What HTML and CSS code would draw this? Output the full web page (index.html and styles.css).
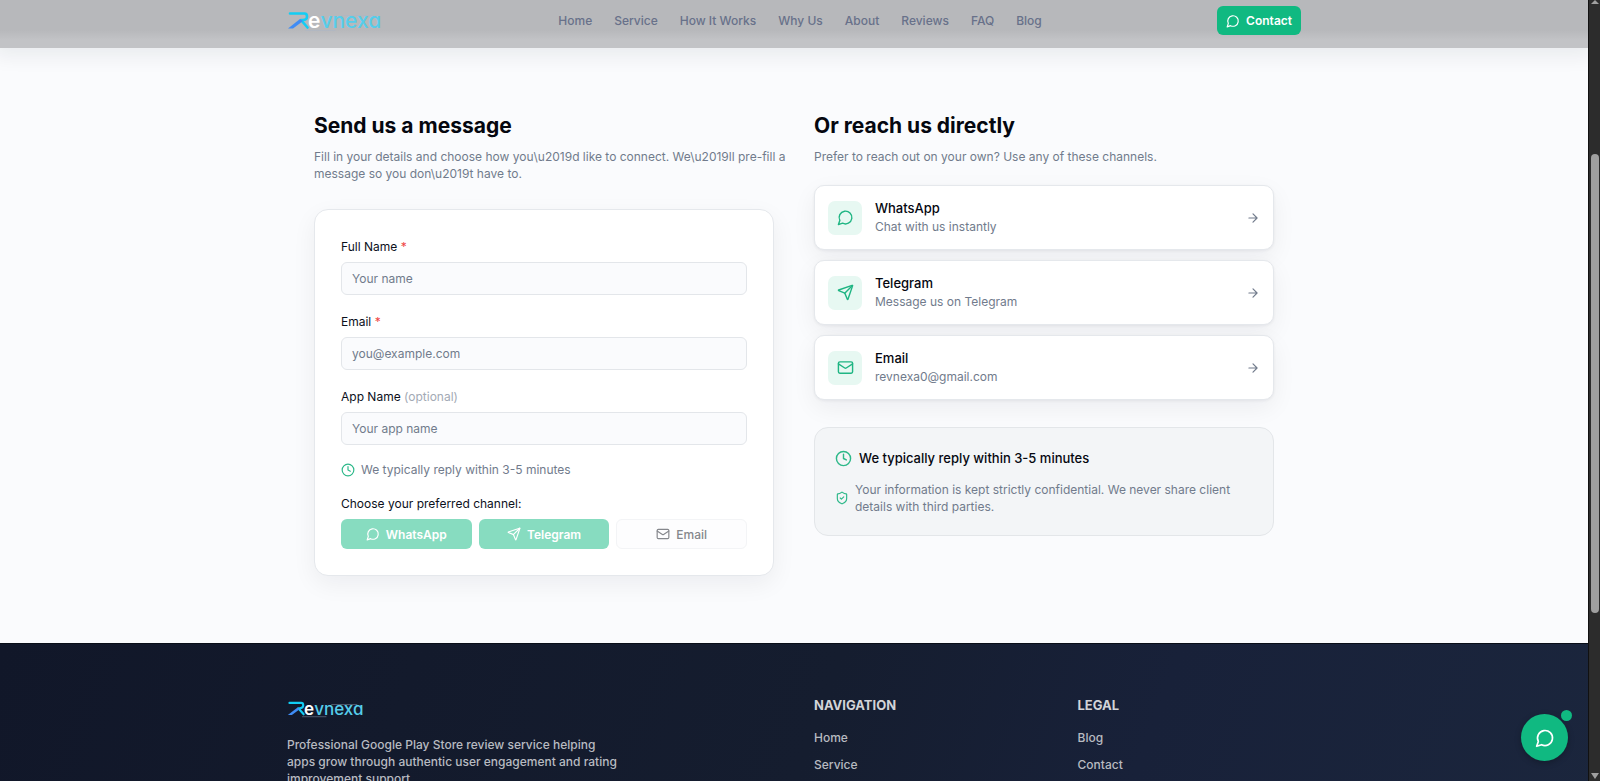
FILE: index.html
```html
<!DOCTYPE html>
<html lang="en">
<head>
<meta charset="utf-8">
<meta name="viewport" content="width=device-width, initial-scale=1">
<title>Contact - Revnexa</title>
<link rel="stylesheet" href="styles.css">
</head>
<body>
<svg class="sprite" aria-hidden="true">
  <symbol id="chat" viewBox="0 0 24 24"><path d="M7.9 20A9 9 0 1 0 4 16.1L2 22Z"/></symbol>
  <symbol id="send" viewBox="0 0 24 24"><path d="M14.536 21.686a.5.5 0 0 0 .937-.024l6.5-19a.496.496 0 0 0-.635-.635l-19 6.5a.5.5 0 0 0-.024.937l7.93 3.18a2 2 0 0 1 1.112 1.11z"/><path d="m21.854 2.147-10.94 10.939"/></symbol>
  <symbol id="mail" viewBox="0 0 24 24"><rect width="20" height="16" x="2" y="4" rx="2"/><path d="m22 7-8.97 5.7a1.94 1.94 0 0 1-2.06 0L2 7"/></symbol>
  <symbol id="clock" viewBox="0 0 24 24"><circle cx="12" cy="12" r="10"/><path d="M12 6v6l4 2"/></symbol>
  <symbol id="shield" viewBox="0 0 24 24"><path d="M20 13c0 5-3.500 7.500-7.660 8.950a1 1 0 0 1-.67-.01C7.500 20.500 4 18 4 13V6a1 1 0 0 1 1-1c2 0 4.500-1.200 6.240-2.720a1.170 1.170 0 0 1 1.520 0C14.510 3.810 17 5 19 5a1 1 0 0 1 1 1z"/><path d="m9 12 2 2 4-4"/></symbol>
  <symbol id="arrow" viewBox="0 0 24 24"><path d="M5 12h14M12 5l7 7-7 7"/></symbol>
  <symbol id="logo" viewBox="0 0 96 24">
    <path d="M3 4.500H17.500Q20 4.500 20 7.500Q20 11 16 11H14L20.500 18.500" fill="none" stroke="#12cdf4" stroke-width="2.600"/>
    <path d="M1 19.500L13 10L16 12L6 19.500Z" fill="#3f8cf5"/>
    <path d="M55 6.500H86M19 21.500H48" class="logo-rule"/>
    <text x="21" y="19" class="logo-text"><tspan fill="#ffffff" font-weight="600">e</tspan><tspan fill="#56cdea">vnexa</tspan></text>
  </symbol>
</svg>

<div class="window">
  <div class="page">
    <header class="header">
      <div class="wide header-row">
        <a href="#" aria-label="Revnexa"><svg class="logo"><use href="#logo"/></svg></a>
        <nav class="nav" aria-label="Main">
          <a href="#">Home</a><a href="#">Service</a><a href="#">How It Works</a><a href="#">Why Us</a><a href="#">About</a><a href="#">Reviews</a><a href="#">FAQ</a><a href="#">Blog</a>
        </nav>
        <a href="#" class="contact"><svg class="icon"><use href="#chat"/></svg>Contact</a>
      </div>
    </header>

    <main class="content">
      <section>
        <h2>Send us a message</h2>
        <p class="lead">Fill in your details and choose how you\u2019d like to connect. We\u2019ll pre-fill a message so you don\u2019t have to.</p>
        <form class="form">
          <div class="field">
            <label for="name">Full Name <span class="required">*</span></label>
            <input id="name" type="text" placeholder="Your name">
          </div>
          <div class="field">
            <label for="email">Email <span class="required">*</span></label>
            <input id="email" type="email" placeholder="you@example.com">
          </div>
          <div class="field">
            <label for="app">App Name <span class="optional">(optional)</span></label>
            <input id="app" type="text" placeholder="Your app name">
          </div>
          <p class="reply"><svg class="icon"><use href="#clock"/></svg>We typically reply within 3-5 minutes</p>
          <p class="choose">Choose your preferred channel:</p>
          <div class="channels">
            <button type="button" class="solid" disabled><svg class="icon"><use href="#chat"/></svg>WhatsApp</button>
            <button type="button" class="solid" disabled><svg class="icon"><use href="#send"/></svg>Telegram</button>
            <button type="button" class="outline" disabled><svg class="icon"><use href="#mail"/></svg>Email</button>
          </div>
        </form>
      </section>

      <section>
        <h2>Or reach us directly</h2>
        <p class="lead">Prefer to reach out on your own? Use any of these channels.</p>
        <div class="cards">
          <a href="#" class="card">
            <span class="badge"><svg><use href="#chat"/></svg></span>
            <span class="card-text"><strong>WhatsApp</strong><span>Chat with us instantly</span></span>
            <svg class="icon"><use href="#arrow"/></svg>
          </a>
          <a href="#" class="card">
            <span class="badge"><svg><use href="#send"/></svg></span>
            <span class="card-text"><strong>Telegram</strong><span>Message us on Telegram</span></span>
            <svg class="icon"><use href="#arrow"/></svg>
          </a>
          <a href="#" class="card">
            <span class="badge"><svg><use href="#mail"/></svg></span>
            <span class="card-text"><strong>Email</strong><span>revnexa0@gmail.com</span></span>
            <svg class="icon"><use href="#arrow"/></svg>
          </a>
        </div>
        <div class="info">
          <p class="info-title"><svg><use href="#clock"/></svg>We typically reply within 3-5 minutes</p>
          <p class="info-note"><svg class="icon"><use href="#shield"/></svg>Your information is kept strictly confidential. We never share client details with third parties.</p>
        </div>
      </section>
    </main>

    <footer class="footer">
      <div class="wide footer-grid">
        <div class="brand">
          <a href="#" aria-label="Revnexa"><svg class="logo small"><use href="#logo"/></svg></a>
          <p class="about">Professional Google Play Store review service helping apps grow through authentic user engagement and rating improvement support.</p>
        </div>
        <nav aria-labelledby="nav-title">
          <h3 id="nav-title">NAVIGATION</h3>
          <a href="#">Home</a>
          <a href="#">Service</a>
        </nav>
        <nav aria-labelledby="legal-title">
          <h3 id="legal-title">LEGAL</h3>
          <a href="#">Blog</a>
          <a href="#">Contact</a>
        </nav>
      </div>
    </footer>
    <button type="button" class="float" aria-label="Chat with us"><svg><use href="#chat"/></svg><span class="dot"></span></button>
  </div>
  <div class="scrollbar" aria-hidden="true">
    <span class="up"></span>
    <span class="thumb"></span>
    <span class="down"></span>
  </div>
</div>
</body>
</html>
```
FILE: styles.css
```css
* { box-sizing: border-box; }
body, h2, h3, p { margin: 0; }
body { font: 12px/17px Inter, "Liberation Sans", sans-serif; color: #05070f; background: #fafbfd; }
a { color: inherit; text-decoration: none; }
svg { fill: none; stroke: currentColor; stroke-width: 2; stroke-linecap: round; stroke-linejoin: round; flex: none; }
button, input { font: inherit; }
.sprite { display: none; }
.icon { width: 14px; height: 14px; }

.window { display: flex; height: 100vh; }
.page { position: relative; flex: 1; min-width: 0; overflow: hidden; }
.wide { width: 100%; max-width: 1014px; margin: 0 auto; }

.header { position: relative; height: 48px; background: linear-gradient(#b7b8bb 0 30px, #c2c3c6 40px 100%); box-shadow: 0 2px 20px 6px rgba(15, 23, 42, .07); }
.header-row { display: flex; align-items: center; justify-content: space-between; height: 41px; }
.logo { display: block; width: 96px; height: 24px; stroke: none; }
.logo.small { width: 78px; height: 20px; }
.logo-text { font-family: Inter, sans-serif; font-size: 21px; font-weight: 500; font-feature-settings: "cv11"; stroke: none; }
.logo-rule { stroke: #a9b6c8; stroke-opacity: .5; stroke-width: 1; }
.nav { display: flex; gap: 22px; color: #68718a; font-weight: 500; }
.contact { display: flex; align-items: center; gap: 6px; height: 29px; padding: 0 9px; border-radius: 6px; background: #10b981; color: #fff; font-weight: 600; }

.content { display: grid; grid-template-columns: 1fr 1fr; align-items: start; gap: 40px; max-width: 960px; margin: 0 auto; padding: 64px 0 67px; }
h2 { font-size: 21px; line-height: 28px; font-weight: 700; margin-bottom: 8px; }
.lead { margin-right: -20px; color: #717b8c; }
.form { margin-top: 27px; padding: 28px 26px 26px; border: 1px solid #e5e8ec; border-radius: 14px; background: #fff; box-shadow: 0 8px 24px rgba(15, 23, 42, .06); }
.field { display: grid; gap: 7px; margin-bottom: 18px; }
.form label, .choose { color: #0c101b; }
.required { color: #ef4444; }
.optional { color: #a3aab5; }
.field input { width: 100%; height: 33px; padding: 0 10px; border: 1px solid #e3e6ea; border-radius: 6px; background: #fafbfd; color: #05070f; }
.field input::placeholder { color: #717b8c; opacity: 1; }
.field:nth-of-type(3) { margin-bottom: 16px; }
.reply { display: flex; align-items: center; gap: 6px; color: #717b8c; margin-bottom: 17px; }
.reply .icon, .info svg { color: #2cb889; }
.choose { margin-bottom: 7px; }
.channels { display: grid; grid-template-columns: repeat(3, 1fr); gap: 7px; }
.channels button { display: flex; align-items: center; justify-content: center; gap: 6px; height: 30px; padding: 0; border: 0; border-radius: 6px; }
.channels .solid { background: #87dcc0; color: #fff; font-weight: 600; }
.channels .outline { border: 1px solid #f3f4f6; background: #fdfdfe; color: #85878c; font-weight: 500; }

.cards { display: grid; gap: 10px; margin: 20px 0 27px; }
.card { display: flex; align-items: center; gap: 13px; height: 65px; padding: 0 13px; border: 1px solid #e5e8ec; border-radius: 10px; background: #fff; color: #717b8c; box-shadow: 0 8px 24px rgba(15, 23, 42, .06), 0 1px 3px rgba(15, 23, 42, .06); }
.badge { display: grid; place-items: center; width: 34px; height: 34px; border-radius: 7px; background: #e7f8f2; color: #1fb583; }
.badge svg, .info-title svg { width: 17px; height: 17px; }
.card-text { display: grid; gap: 1px; flex: 1; }
.card strong { color: #05070f; font-size: 13px; font-weight: 500; }
.info { padding: 20px; border: 1px solid #e3e6e9; border-radius: 14px; background: #f3f5f7; }
.info-title { display: flex; align-items: center; gap: 7px; font-size: 13px; line-height: 20px; font-weight: 500; margin-bottom: 13px; }
.info-note { display: flex; align-items: center; gap: 6px; color: #717b8c; }

.footer { min-height: 280px; padding-top: 53px; border-top: 1px solid #090e18; background: linear-gradient(110deg, #111729 0%, #151d2f 50%, #182139 70%, #1b263d 100%); color: #b8bbc1; font-weight: 500; }
.footer-grid { display: grid; grid-template-columns: repeat(4, 1fr); gap: 40px; }
.brand { grid-column: span 2; padding-top: 2px; }
.about { max-width: 330px; margin-top: 17px; }
.footer nav { display: grid; align-content: start; justify-items: start; gap: 10px; }
.footer h3 { font-size: 13px; line-height: 17px; font-weight: 700; color: #d2d4d8; margin-bottom: 5px; }

.float { position: absolute; right: 20px; bottom: 20px; display: grid; place-items: center; width: 47px; height: 47px; padding: 0; border: 0; border-radius: 50%; background: #10b981; color: #fff; box-shadow: 0 2px 6px rgba(0, 0, 0, .25); }
.float svg { width: 20px; height: 20px; }
.dot { position: absolute; top: -4px; right: -4px; width: 11px; height: 11px; border-radius: 50%; background: #10b981; }
.scrollbar { display: flex; flex-direction: column; align-items: center; width: 12px; padding-bottom: 2px; border-left: 1px solid #111; background: #2c2c2c; }
.up, .down { border: 4px solid transparent; }
.up { border-bottom-color: #9f9f9f; border-top: 0; }
.down { order: 2; border-top: 6px solid #9f9f9f; border-bottom: 0; }
.thumb { width: 8px; flex: 460; margin-top: 150px; border-radius: 4px; background: #9f9f9f; }
.scrollbar::after { content: ""; flex: 160; order: 1; }
```
